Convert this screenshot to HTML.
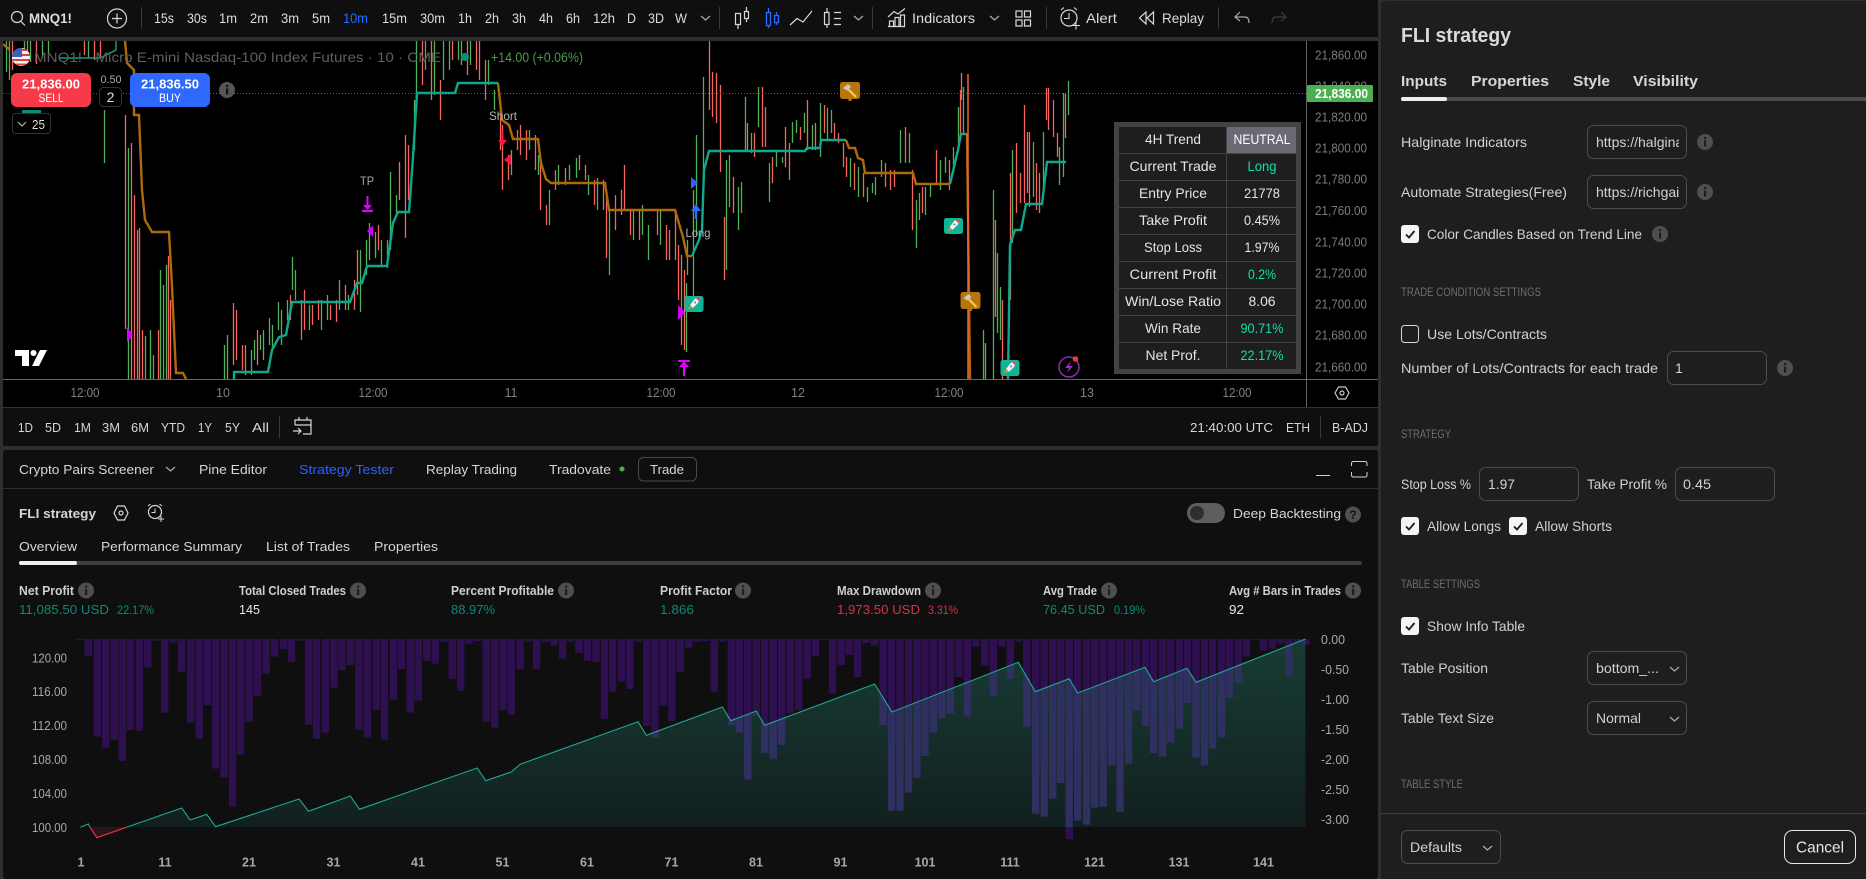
<!DOCTYPE html>
<html lang="en">
<head>
<meta charset="utf-8">
<title>MNQ1! - FLI strategy</title>
<style>
html,body{margin:0;padding:0;background:#2e2e2e;width:1866px;height:879px;overflow:hidden}
svg{display:block;position:absolute;left:0;top:0}
text{font-family:"Liberation Sans",sans-serif;font-size:14px;fill:#d6d6d6}
.b{font-weight:700}
.tb text,.tb{fill:#dcdcdc}
.s12{font-size:12px}.s13{font-size:13px}
.ax{font-size:13px;fill:#7d7d7d}
.ax2{font-size:12.5px;fill:#a8a8a8}
.ti{font-size:12.5px;fill:#808080}
.lab{fill:#d2d2d2}
.sec{font-size:11.5px;fill:#6e6e6e}
.stat{font-size:12.5px;fill:#cfcfcf;font-weight:700}
.val{font-size:13px}
.gr{fill:#0b8a74}.rd{fill:#d9304a}.wh{fill:#e6e6e6}
.tc{text-anchor:middle;fill:#e4e4e4}
.tg{text-anchor:middle;fill:#12dfa8}
.box{fill:none;stroke:#4c4c4c;stroke-width:1}
.ic{fill:none;stroke:#d8d8d8;stroke-width:1.2}
.chev{fill:none;stroke:#b0b0b0;stroke-width:1.2}
</style>
</head>
<body>
<svg xmlns="http://www.w3.org/2000/svg" width="1866" height="879" viewBox="0 0 1866 879">
<defs>
<clipPath id="chartClip"><rect x="3" y="41" width="1303" height="338"/></clipPath>
<clipPath id="flag"><circle cx="21" cy="57" r="9"/></clipPath>
<clipPath id="areaClip"><path d="M127 827L181.700 808L190.200 820L206.700 814.300L215.600 826.700L299.100 799L308.500 811.300L350.400 796L359.400 809.300L477.200 768L485.700 780.700L511.200 772L520.100 764.300L638 721.700L646.400 735.300L722.300 707L730.800 720.700L756.300 711L764.700 725.300L874.600 684L892 712L1018.300 662.300L1035.300 691.700L1069.200 678.700L1077.700 693L1145 667.300L1153.600 681.700L1187 668.300L1196 682.300L1305.400 639V827z"/></clipPath>
<linearGradient id="areaG" x1="0" y1="639" x2="0" y2="827" gradientUnits="userSpaceOnUse"><stop offset="0" stop-color="#183c35"/><stop offset="1" stop-color="#12201f"/></linearGradient>
<g id="info"><circle cx="0" cy="0" r="8" fill="#4f4f4f"/><rect x="-1" y="-1.500" width="2.200" height="6" fill="#1e1e1e"/><rect x="-1" y="-5" width="2.200" height="2.200" fill="#1e1e1e"/></g>
<g id="chk"><rect x="0" y="0" width="18" height="18" rx="3" fill="#f4f4f4"/><path d="M5 9.500L8 12.500L13.500 6" fill="none" stroke="#1e1e1e" stroke-width="1.800"/></g>
<path id="cv" d="M0 0L4.500 4L9 0" class="chev"/>
<g id="rocket"><rect x="-9.500" y="-8" width="19" height="16" rx="2.500" fill="#0fb594"/><path d="M5.500 -6.500L1 -5.500L-4 1L-1 4L4.500 -1.500z" fill="#f4f4f4" stroke="#8fa8b0" stroke-width=".4"/><path d="M5.500 -6.500L2 -5.700L4.700 -3z" fill="#e5393a"/><circle cx="1" cy="-1.500" r="1" fill="#4a7fd0"/><path d="M-3.500 1.500L-6.500 5.500L-1.500 3.500z" fill="#f0902a"/></g>
<g id="hammer"><rect x="-10" y="-9" width="20" height="17" rx="2.500" fill="#b8750c"/><rect x="-1.500" y="8" width="3" height="2" fill="#b8750c"/><path d="M-3 -3L6 6" stroke="#f0cf5a" stroke-width="2.200"/><path d="M-7 -3L-2 -7L1 -4L-3 -0.500z" fill="#c9c9c9"/></g>
<g id="bars" fill="none" stroke-width="16.500">
<path transform="translate(0,630) scale(.44643,.33333)" d="M180 27V30M198 27V78M218 27V320M237 27V353M256 27V330M274 27V393M292 27V300M312 27V302M331 27V113M350 27V32M369 27V248M388 27V38M407 27V125M427 27V278M446 27V326M465 27V225M483 27V416M502 27V443M521 27V530M539 27V374M558 27V275M577 27V197M596 27V131M615 27V80M635 27V57M653 27V96M672 27V32M691 27V284M709 27V326M729 27V308M748 27V173M766 27V120M785 27V105M804 27V299M823 27V323M843 27V240M861 27V329M881 27V209M899 27V117M919 27V248M937 27V212M956 27V93M975 27V101M994 27V35M1013 27V147M1032 27V182M1051 27V41M1070 27V33M1089 27V275M1108 27V293M1127 27V240M1145 27V254M1165 27V117M1184 27V35M1202 27V117M1222 27V35M1241 27V47M1260 27V86M1278 27V35M1297 27V69M1316 27V92M1335 27V96M1354 27V267M1372 27V185M1392 27V155M1411 27V177M1430 27V35M1449 27V288M1467 27V323M1486 27V228M1505 27V273M1524 27V126M1543 27V53M1562 27V35"/>
<path transform="translate(700,630) scale(.44643,.33333)" d="M12 27V33M32 27V185M51 27V35M70 27V285M88 27V308M107 27V449M126 27V258M145 27V369M164 27V386M183 27V345M202 27V250M221 27V240M240 27V146M259 27V78M278 27V30M297 27V191M316 27V105M334 27V75M353 27V141M372 27V39M391 27V47M410 27V285M429 27V542M448 27V542M467 27V488M486 27V443M504 27V378M523 27V308M542 27V264M561 27V251M580 27V141M599 27V260M618 27V50M638 27V107M657 27V197M676 27V50M695 27V147M714 27V35M732 27V290M752 27V551M771 27V560M790 27V506M808 27V459M827 27V627M846 27V572M866 27V584M884 27V533M903 27V530M922 27V407M941 27V545M960 27V401M978 27V243M998 27V288M1016 27V369M1036 27V380M1054 27V338M1074 27V296M1092 27V219M1111 27V383M1130 27V407M1148 27V356M1168 27V323M1186 27V204M1206 27V158M1224 27V80M1244 27V30M1262 27V62M1282 27V56M1300 27V41M1319 27V140M1338 27V38M1357 27V44"/>
</g>
</defs>

<rect width="1866" height="879" fill="#2e2e2e"/>

<!-- TOP TOOLBAR -->
<rect x="0" y="0" width="1378" height="37" fill="#0f0f0f"/>
<g class="tb">
<circle cx="17" cy="17" r="5.500" class="ic"/><path d="M21 21.500L25 25.500" class="ic"/>
<text x="29" y="23" class="b" textLength="43" lengthAdjust="spacingAndGlyphs">MNQ1!</text>
<circle cx="117" cy="18.500" r="9.500" class="ic"/><path d="M112 18.500H122M117 13.500V23.500" class="ic"/>
<path d="M141.500 7V29M719.500 7V29M872.500 7V29M1046.500 7V29M1218.500 7V29" stroke="#3a3a3a"/>
<text x="154" y="23" textLength="20" lengthAdjust="spacingAndGlyphs">15s</text>
<text x="187" y="23" textLength="20" lengthAdjust="spacingAndGlyphs">30s</text>
<text x="219" y="23" textLength="18" lengthAdjust="spacingAndGlyphs">1m</text>
<text x="250" y="23" textLength="18" lengthAdjust="spacingAndGlyphs">2m</text>
<text x="281" y="23" textLength="18" lengthAdjust="spacingAndGlyphs">3m</text>
<text x="312" y="23" textLength="18" lengthAdjust="spacingAndGlyphs">5m</text>
<text x="343" y="23" textLength="25" lengthAdjust="spacingAndGlyphs" style="fill:#1f6bff">10m</text>
<text x="382" y="23" textLength="25" lengthAdjust="spacingAndGlyphs">15m</text>
<text x="420" y="23" textLength="25" lengthAdjust="spacingAndGlyphs">30m</text>
<text x="458" y="23" textLength="14" lengthAdjust="spacingAndGlyphs">1h</text>
<text x="485" y="23" textLength="14" lengthAdjust="spacingAndGlyphs">2h</text>
<text x="512" y="23" textLength="14" lengthAdjust="spacingAndGlyphs">3h</text>
<text x="539" y="23" textLength="14" lengthAdjust="spacingAndGlyphs">4h</text>
<text x="566" y="23" textLength="14" lengthAdjust="spacingAndGlyphs">6h</text>
<text x="593" y="23" textLength="22" lengthAdjust="spacingAndGlyphs">12h</text>
<text x="627" y="23" textLength="9" lengthAdjust="spacingAndGlyphs">D</text>
<text x="648" y="23" textLength="16" lengthAdjust="spacingAndGlyphs">3D</text>
<text x="675" y="23" textLength="12" lengthAdjust="spacingAndGlyphs">W</text>
<use href="#cv" x="701" y="16"/>
<!-- bar style icons -->
<path d="M735.500 13.500h5v11h-5zM738 24.500V29M744.500 11.500h4v7h-4zM746.500 7V11.500M746.500 18.500V22" class="ic"/>
<path d="M766.500 12.500h4v13h-4zM768.500 8V12.500M768.500 25.500V28M774.500 15.500h4v7h-4zM776.500 12V15.500M776.500 22.500V25" fill="none" stroke="#2a6bff" stroke-width="1.300"/>
<path d="M790 25L797 18.500L803 22L812 11" class="ic"/>
<path d="M824.500 12.500h4.500v12h-4.500zM827 8V12.500M827 24.500V28M834 12.500h7M834 18.500h7M834 24.500h7" class="ic"/>
<use href="#cv" x="854" y="16"/>
<!-- indicators -->
<path d="M888 26.500H905M889.500 26V21h4v5M895 26V17.500h4V26M900.500 26V15h4V26M888 17L894 11.500L898 14L905 8.500" class="ic"/>
<text x="912" y="23" textLength="63" lengthAdjust="spacingAndGlyphs">Indicators</text>
<use href="#cv" x="990" y="16"/>
<path d="M1016 11h6v6h-6zM1024.500 11h6v6h-6zM1016 20h6v6h-6zM1024.500 20h6v6h-6z" class="ic"/>
<!-- alert -->
<circle cx="1069" cy="18" r="8" class="ic"/><path d="M1069 13V18.500H1064M1061 10L1064 7.500M1077 10L1074 7.500M1072 25.500H1080M1076 21.500V29.500" class="ic" style="stroke-width:1.100"/>
<text x="1086" y="23" textLength="31" lengthAdjust="spacingAndGlyphs">Alert</text>
<path d="M1146 12L1139.500 18L1146 24zM1153.500 12L1147 18L1153.500 24z" class="ic"/>
<text x="1162" y="23" textLength="42" lengthAdjust="spacingAndGlyphs">Replay</text>
<path d="M1240 12L1235 17L1240 21M1235 17H1245C1248 17 1249 20 1249 23" class="ic" style="stroke:#a8a8a8"/>
<path d="M1281 12L1286 17L1281 21M1286 17H1276C1273 17 1272 20 1272 23" class="ic" style="stroke:#3d3d3d"/>
</g>

<!-- CHART -->
<rect x="3" y="41" width="1375" height="366" fill="#000"/>
<g clip-path="url(#chartClip)">
<g transform="translate(.5 0)" fill="none" stroke-width="1.300">
<path stroke="#4fb25a" d="M6 41V72M9 41V80M24 41V60M30 41V62M42 41V58M48 41V60M88 41V58M104 110V163M128 148V379M145 336V379M150 330V379M153 355V379M160 270V379M163 285V379M166 265V379M224 345V379M227 335V379M251 350V375M254 340V360M260 335V350M263 330V360M269 318V345M272 325V350M278 302V330M281 310V345M287 300V320M292 257V290M295 270V300M309 305V330M321 300V330M327 295V320M339 280V310M348 295V310M360 250V312M366 240V275M369 223V260M375 232V258M381 240V265M387 240V268M390 172V250M396 195V215M414 100V150M416 41V100M425 41V70M434 41V95M443 41V80M449 41V70M458 41V60M461 41V65M470 41V65M488 60V85M494 90V110M511 150V175M529 130V150M538 155V175M549 190V225M558 165V185M569 165V180M576 158V178M588 175V195M597 178V210M609 210V275M633 210V240M642 205V235M648 225V260M660 210V245M687 240V275M686 283V352M693 190V300M696 135V235M703 77V175M726 160V270M729 155V207M738 187V230M741 182V213M745 97V150M751 133V153M758 87V127M769 163V202M776 152V167M782 157V163M792 122V143M796 120V133M804 113V133M812 125V150M820 103V157M827 108V140M831 110V133M850 158V187M858 167V197M867 187V202M872 183V193M875 177V195M881 160V177M900 130V163M909 133V163M916 200V248M919 193V220M925 187V215M930 183V197M940 160V190M945 157V173M953 147V173M958 107V147M963 87V133M983 330V379M985 343V379M993 190V379M997 253V333M1000 287V340M1012 150V243M1033 142V197M1043 132V187M1059 147V185M1063 93V177M1068 81V115"/>
<path stroke="#f5655e" d="M12 41V70M27 41V55M36 41V64M84 41V55M94 41V60M100 41V58M125 115V329M131 143V379M134 195V379M137 230V379M139 228V379M142 330V379M158 330V379M168 256V379M170 300V379M233 303V365M236 310V360M242 345V370M245 345V375M257 330V365M290 295V320M301 300V340M304 290V330M312 305V325M318 300V320M330 305V320M336 300V322M345 285V310M354 280V310M357 250V295M378 225V250M399 162V200M405 135V238M408 145V200M422 41V85M431 41V100M440 80V120M452 41V60M467 41V75M476 41V70M479 41V80M485 60V100M500 100V150M502 125V190M508 155V180M517 130V150M520 125V155M526 130V160M535 135V170M540 160V210M546 205V225M555 170V190M565 168V185M579 155V170M585 165V180M594 180V205M603 180V210M606 195V258M615 195V230M621 190V215M624 165V210M630 210V235M639 210V240M657 210V235M666 225V260M669 230V260M675 210V260M678 245V300M681 255V345M684 270V350M709 41V110M712 72V117M716 73V123M720 85V172M724 217V280M733 177V213M747 123V150M754 133V157M762 87V147M765 107V147M772 157V183M785 127V167M789 143V180M800 127V140M807 100V150M815 123V150M824 105V133M834 123V140M838 133V143M843 143V167M846 157V177M854 163V190M863 173V197M885 163V187M890 170V190M894 170V187M905 127V163M912 170V230M922 187V213M936 150V183M949 160V190M960 90V133M961 73V100M995 220V317M1002 300V379M1010 173V300M1016 143V213M1020 173V203M1024 105V203M1027 132V193M1029 132V207M1036 163V210M1039 173V213M1046 88V120M1048 88V130M1053 100V137M1057 133V157M1065 93V138"/>
</g>
<!-- top-left remains of trend -->
<path d="M3 44L10 50" stroke="#ac6a08" stroke-width="2.400" fill="none"/>
<path d="M60 58H100L116 50V41" stroke="#0e9e86" stroke-width="1.500" fill="none"/>
<!-- trend lines -->
<path fill="none" stroke="#ac6a08" stroke-width="2.400" d="M125 41L127 63L134 70V115H139L142 190L145 220L152 232H169L172 287L176 373H183L186 379"/>
<path fill="none" stroke="#0fa88d" stroke-width="2.400" d="M234 379V372H268L272 350L279 337L286 335L292 302H350L357 283H362L367 266H387L393 223L398 212H409L413 157L417 93H455L458 83H498"/>
<path fill="none" stroke="#ac6a08" stroke-width="2.400" d="M498 83L502 120L509 125L513 139H538L541 163L546 179L551 183H605L609 210H675L683 237L687 256H692"/>
<path fill="none" stroke="#0fa88d" stroke-width="2.400" d="M692 256L699 240L702 230L704 170L709 151H805L807 148H820L821 140H846"/>
<path fill="none" stroke="#ac6a08" stroke-width="2.400" d="M846 140L849 148H855L858 158L863 160L865 173H913L916 184H950"/>
<path fill="none" stroke="#0fa88d" stroke-width="2.400" d="M950 184L958 150L961 134H967"/>
<path fill="none" stroke="#ac6a08" stroke-width="2.400" d="M967 134L970 379"/>
<path fill="none" stroke="#f0653a" stroke-width="1.500" d="M968 74V379"/>
<path fill="none" stroke="#0fa88d" stroke-width="2.400" d="M1008 379L1010 245L1015 230H1021L1026 204H1042L1047 162H1066"/>
<path d="M3 93.500H1306" stroke="#3e7a3e" stroke-dasharray="1 2"/>
</g>

<!-- markers -->
<use href="#hammer" x="500" y="36" clip-path="url(#chartClip)"/>
<text x="367" y="185" class="s12" text-anchor="middle" style="fill:#a8a8a8" textLength="14" lengthAdjust="spacingAndGlyphs">TP</text>
<path d="M367.500 196V206" stroke="#e000ff" stroke-width="2"/><path d="M363 205L367.500 210L372 205z" fill="#e000ff"/><rect x="362" y="210" width="11" height="2" fill="#e000ff"/>
<path d="M373 225.500V237L367 231z" fill="#d400ff"/>
<path d="M127 327V342L133 335z" fill="#d400ff"/>
<text x="503" y="120" class="s12" text-anchor="middle" style="fill:#b5b5b5" textLength="28" lengthAdjust="spacingAndGlyphs">Short</text>
<path d="M502.500 130V141" stroke="#ff1744" stroke-width="2"/><path d="M498 140L502.500 146L507 140z" fill="#ff1744"/>
<path d="M511 154V165L504 160z" fill="#f01a40"/>
<text x="698" y="237" class="s12" text-anchor="middle" style="fill:#b5b5b5" textLength="25" lengthAdjust="spacingAndGlyphs">Long</text>
<path d="M691 177V189L698 183z" fill="#2962ff"/>
<path d="M696 210V219" stroke="#2f6bff" stroke-width="2.200"/><path d="M691 211L696 204L701 211z" fill="#2f6bff"/>
<path d="M678 305V320L685 312.500z" fill="#d400ff"/>
<rect x="678" y="360" width="12" height="2" fill="#e000ff"/><path d="M684 365V376" stroke="#e000ff" stroke-width="2"/><path d="M679 367L684 361L689 367z" fill="#e000ff"/>
<use href="#rocket" x="694" y="304"/>
<use href="#rocket" x="953.500" y="226"/>
<use href="#rocket" x="1010" y="368"/>
<use href="#hammer" x="850" y="91"/>
<use href="#hammer" x="970.500" y="301"/>
<circle cx="1069" cy="367" r="10" fill="none" stroke="#8a2bb0" stroke-width="1.500"/>
<path d="M1071 361L1065 368H1069L1067 373L1073 366H1069z" fill="#a12cc4"/>
<circle cx="1075.500" cy="359" r="2.800" fill="#f23645"/>

<!-- legend -->
<g clip-path="url(#flag)"><rect x="12" y="48" width="18" height="18" fill="#f4f4f4"/><path d="M12 50H30M12 55H30M12 60H30M12 64.500H30" stroke="#e0413c" stroke-width="2"/><rect x="12" y="48" width="10" height="9" fill="#3b5fbf"/></g>
<text x="34" y="62" textLength="407" lengthAdjust="spacingAndGlyphs" style="fill:#5f5f5f">MNQ1! · Micro E-mini Nasdaq-100 Index Futures · 10 · CME</text>
<circle cx="465" cy="57" r="4" fill="#0d8c78"/>
<text x="491" y="62" textLength="92" lengthAdjust="spacingAndGlyphs" style="fill:#4a9c4a">+14.00 (+0.06%)</text>

<!-- buy/sell -->
<rect x="11" y="73" width="80" height="34" rx="6" fill="#f73a4a"/>
<text x="51" y="88.500" class="s13 b" text-anchor="middle" style="fill:#fff" textLength="58" lengthAdjust="spacingAndGlyphs">21,836.00</text>
<text x="51" y="102" class="s12" text-anchor="middle" style="fill:#fff" textLength="25" lengthAdjust="spacingAndGlyphs">SELL</text>
<text x="111" y="83" class="s12" text-anchor="middle" style="fill:#aaa;font-size:11px" textLength="21" lengthAdjust="spacingAndGlyphs">0.50</text>
<rect x="99.500" y="87.500" width="22" height="19" rx="4" fill="#000" stroke="#333"/>
<text x="110.500" y="102" text-anchor="middle" style="fill:#ddd">2</text>
<rect x="130" y="73" width="80" height="34" rx="6" fill="#2f68ff"/>
<text x="170" y="88.500" class="s13 b" text-anchor="middle" style="fill:#fff" textLength="58" lengthAdjust="spacingAndGlyphs">21,836.50</text>
<text x="170" y="102" class="s12" text-anchor="middle" style="fill:#fff" textLength="22" lengthAdjust="spacingAndGlyphs">BUY</text>
<circle cx="227" cy="90" r="8" fill="#555"/><rect x="226" y="88.500" width="2.200" height="6" fill="#111"/><rect x="226" y="85" width="2.200" height="2.200" fill="#111"/>
<rect x="22" y="110" width="19" height="3" fill="#0e8a76"/>
<rect x="12.500" y="113.500" width="38" height="20" rx="3" fill="#000" stroke="#333"/>
<path d="M18 122L22 126L26 122" class="chev"/>
<text x="32" y="129" class="s13" style="fill:#ddd" textLength="13" lengthAdjust="spacingAndGlyphs">25</text>

<!-- TV logo -->
<path d="M15 350H29V366H22V356H15z" fill="#fff"/><circle cx="33.500" cy="353" r="3" fill="#fff"/><path d="M40 350H47L39 366H32z" fill="#fff"/>

<!-- info table -->
<rect x="1114" y="122" width="187" height="252" fill="#434343"/>
<rect x="1119" y="127" width="177" height="242" fill="#1e1e1e"/>
<rect x="1227" y="127" width="69" height="26.500" fill="#6a6a74"/>
<path d="M1119 153.500H1296M1119 180.500H1296M1119 207.500H1296M1119 234.500H1296M1119 261.500H1296M1119 288.500H1296M1119 315.500H1296M1119 342.500H1296M1226.500 127V369" stroke="#434343"/>
<text x="1173" y="144" class="tc" textLength="56" lengthAdjust="spacingAndGlyphs">4H Trend</text>
<text x="1262" y="144" class="tc" style="fill:#fff" textLength="57" lengthAdjust="spacingAndGlyphs">NEUTRAL</text>
<text x="1173" y="171" class="tc" textLength="87" lengthAdjust="spacingAndGlyphs">Current Trade</text>
<text x="1262" y="171" class="tg" textLength="29" lengthAdjust="spacingAndGlyphs">Long</text>
<text x="1173" y="198" class="tc" textLength="68" lengthAdjust="spacingAndGlyphs">Entry Price</text>
<text x="1262" y="198" class="tc" textLength="36" lengthAdjust="spacingAndGlyphs">21778</text>
<text x="1173" y="225" class="tc" textLength="68" lengthAdjust="spacingAndGlyphs">Take Profit</text>
<text x="1262" y="225" class="tc" textLength="36" lengthAdjust="spacingAndGlyphs">0.45%</text>
<text x="1173" y="252" class="tc" textLength="58" lengthAdjust="spacingAndGlyphs">Stop Loss</text>
<text x="1262" y="252" class="tc" textLength="35" lengthAdjust="spacingAndGlyphs">1.97%</text>
<text x="1173" y="279" class="tc" textLength="87" lengthAdjust="spacingAndGlyphs">Current Profit</text>
<text x="1262" y="279" class="tg" textLength="28" lengthAdjust="spacingAndGlyphs">0.2%</text>
<text x="1173" y="306" class="tc" textLength="96" lengthAdjust="spacingAndGlyphs">Win/Lose Ratio</text>
<text x="1262" y="306" class="tc" textLength="27" lengthAdjust="spacingAndGlyphs">8.06</text>
<text x="1173" y="333" class="tc" textLength="56" lengthAdjust="spacingAndGlyphs">Win Rate</text>
<text x="1262" y="333" class="tg" textLength="43" lengthAdjust="spacingAndGlyphs">90.71%</text>
<text x="1173" y="360" class="tc" textLength="55" lengthAdjust="spacingAndGlyphs">Net Prof.</text>
<text x="1262" y="360" class="tg" textLength="43" lengthAdjust="spacingAndGlyphs">22.17%</text>

<!-- price axis -->
<path d="M1306.500 41V407" stroke="#666"/>
<path d="M3 379.500H1378" stroke="#666"/>
<g class="ax">
<text x="1315" y="59.500" class="ax" textLength="52" lengthAdjust="spacingAndGlyphs">21,860.00</text>
<text x="1315" y="90.500" class="ax" textLength="52" lengthAdjust="spacingAndGlyphs">21,840.00</text>
<text x="1315" y="121.500" class="ax" textLength="52" lengthAdjust="spacingAndGlyphs">21,820.00</text>
<text x="1315" y="152.500" class="ax" textLength="52" lengthAdjust="spacingAndGlyphs">21,800.00</text>
<text x="1315" y="183.500" class="ax" textLength="52" lengthAdjust="spacingAndGlyphs">21,780.00</text>
<text x="1315" y="215" class="ax" textLength="52" lengthAdjust="spacingAndGlyphs">21,760.00</text>
<text x="1315" y="246.500" class="ax" textLength="52" lengthAdjust="spacingAndGlyphs">21,740.00</text>
<text x="1315" y="277.500" class="ax" textLength="52" lengthAdjust="spacingAndGlyphs">21,720.00</text>
<text x="1315" y="308.500" class="ax" textLength="52" lengthAdjust="spacingAndGlyphs">21,700.00</text>
<text x="1315" y="339.500" class="ax" textLength="52" lengthAdjust="spacingAndGlyphs">21,680.00</text>
<text x="1315" y="371.500" class="ax" textLength="52" lengthAdjust="spacingAndGlyphs">21,660.00</text>
</g>
<rect x="1307" y="85" width="66" height="17" rx="1" fill="#4caf50"/>
<text x="1315" y="98" class="s13 b" style="fill:#fff" textLength="53" lengthAdjust="spacingAndGlyphs">21,836.00</text>

<!-- time axis -->
<g>
<text x="85" y="397" class="ti" text-anchor="middle" textLength="29" lengthAdjust="spacingAndGlyphs">12:00</text>
<text x="223" y="397" class="ti" text-anchor="middle">10</text>
<text x="373" y="397" class="ti" text-anchor="middle" textLength="29" lengthAdjust="spacingAndGlyphs">12:00</text>
<text x="511" y="397" class="ti" text-anchor="middle">11</text>
<text x="661" y="397" class="ti" text-anchor="middle" textLength="29" lengthAdjust="spacingAndGlyphs">12:00</text>
<text x="798" y="397" class="ti" text-anchor="middle">12</text>
<text x="949" y="397" class="ti" text-anchor="middle" textLength="29" lengthAdjust="spacingAndGlyphs">12:00</text>
<text x="1087" y="397" class="ti" text-anchor="middle">13</text>
<text x="1237" y="397" class="ti" text-anchor="middle" textLength="29" lengthAdjust="spacingAndGlyphs">12:00</text>
</g>
<path d="M1335 393L1338.500 387H1345.500L1349 393L1345.500 399H1338.500z" class="ic" style="stroke:#c8c8c8"/><circle cx="1342" cy="393" r="2" class="ic" style="stroke:#c8c8c8"/>

<!-- range bar -->
<rect x="3" y="407" width="1375" height="39" fill="#0f0f0f"/>
<path d="M3 407.500H1378" stroke="#333"/>
<g>
<text x="18" y="432" class="s13" textLength="15" lengthAdjust="spacingAndGlyphs">1D</text>
<text x="45" y="432" class="s13" textLength="16" lengthAdjust="spacingAndGlyphs">5D</text>
<text x="74" y="432" class="s13" textLength="17" lengthAdjust="spacingAndGlyphs">1M</text>
<text x="102" y="432" class="s13" textLength="18" lengthAdjust="spacingAndGlyphs">3M</text>
<text x="131" y="432" class="s13" textLength="18" lengthAdjust="spacingAndGlyphs">6M</text>
<text x="161" y="432" class="s13" textLength="24" lengthAdjust="spacingAndGlyphs">YTD</text>
<text x="198" y="432" class="s13" textLength="14" lengthAdjust="spacingAndGlyphs">1Y</text>
<text x="225" y="432" class="s13" textLength="15" lengthAdjust="spacingAndGlyphs">5Y</text>
<text x="252" y="432" class="s13" textLength="17" lengthAdjust="spacingAndGlyphs">All</text>
<path d="M279.500 416V438M1320.500 416V438" stroke="#3a3a3a"/>
<path d="M295 425V420H311V434H303M295 425H311M299 417V420M307 417V420M293 431H301M298 428L301 431L298 434" class="ic"/>
<text x="1190" y="432" class="s13" textLength="83" lengthAdjust="spacingAndGlyphs">21:40:00 UTC</text>
<text x="1286" y="432" class="s13" textLength="24" lengthAdjust="spacingAndGlyphs">ETH</text>
<text x="1332" y="432" class="s13" textLength="36" lengthAdjust="spacingAndGlyphs">B-ADJ</text>
</g>

<!-- BOTTOM PANEL -->
<rect x="3" y="450" width="1375" height="429" rx="3" fill="#0f0f0f"/>
<path d="M3 488.500H1378" stroke="#2e2e2e"/>
<text x="19" y="474" class="s13" textLength="135" lengthAdjust="spacingAndGlyphs">Crypto Pairs Screener</text>
<use href="#cv" x="166" y="467"/>
<text x="199" y="474" class="s13" textLength="68" lengthAdjust="spacingAndGlyphs">Pine Editor</text>
<text x="299" y="474" class="s13" style="fill:#2962ff" textLength="95" lengthAdjust="spacingAndGlyphs">Strategy Tester</text>
<text x="426" y="474" class="s13" textLength="91" lengthAdjust="spacingAndGlyphs">Replay Trading</text>
<text x="549" y="474" class="s13" textLength="62" lengthAdjust="spacingAndGlyphs">Tradovate</text>
<circle cx="622" cy="469" r="2.500" fill="#4caf50"/>
<rect x="638.500" y="457.500" width="58" height="23.500" rx="5" fill="none" stroke="#4a4a4a"/>
<text x="650" y="474" class="s13" textLength="34" lengthAdjust="spacingAndGlyphs">Trade</text>
<path d="M1316 475.500H1330" stroke="#d0d0d0"/>
<path d="M1351.500 466V463.500Q1351.500 461.500 1353.500 461.500H1365Q1367 461.500 1367 463.500V466M1351.500 472V475Q1351.500 477 1353.500 477H1365Q1367 477 1367 475V472" fill="none" stroke="#d0d0d0"/>

<text x="19" y="518" class="s13 b" textLength="77" lengthAdjust="spacingAndGlyphs">FLI strategy</text>
<path d="M114 513L117.500 506H124.500L128 513L124.500 520H117.500z" class="ic"/><circle cx="121" cy="513" r="2" class="ic"/>
<circle cx="155" cy="512" r="6.500" class="ic"/><path d="M155 508.500V512.500H151.500M148 506L150.500 504M162 506L159.500 504M158 519H164M161 516V522" class="ic" style="stroke-width:1"/>
<rect x="1187" y="503" width="38" height="20" rx="10" fill="#5e5e5e"/><circle cx="1197" cy="513" r="7" fill="#2e2e2e"/>
<text x="1233" y="518" class="s13" textLength="108" lengthAdjust="spacingAndGlyphs">Deep Backtesting</text>
<circle cx="1353" cy="514.500" r="8" fill="#4f4f4f"/><text x="1353" y="519" class="s12 b" text-anchor="middle" style="fill:#111">?</text>

<text x="19" y="551" class="s13" textLength="58" lengthAdjust="spacingAndGlyphs">Overview</text>
<text x="101" y="551" class="s13" textLength="141" lengthAdjust="spacingAndGlyphs">Performance Summary</text>
<text x="266" y="551" class="s13" textLength="84" lengthAdjust="spacingAndGlyphs">List of Trades</text>
<text x="374" y="551" class="s13" textLength="64" lengthAdjust="spacingAndGlyphs">Properties</text>
<rect x="19" y="561" width="1343" height="4" rx="2" fill="#3e3e3e"/>
<rect x="19" y="561" width="58" height="4" rx="2" fill="#eee"/>

<!-- stats -->
<text x="19" y="595" class="stat" textLength="55" lengthAdjust="spacingAndGlyphs">Net Profit</text><use href="#info" x="86" y="590.500"/>
<text x="19" y="614" class="val gr" textLength="90" lengthAdjust="spacingAndGlyphs">11,085.50 USD</text>
<text x="117" y="614" class="s12 gr" textLength="37" lengthAdjust="spacingAndGlyphs">22.17%</text>
<text x="239" y="595" class="stat" textLength="107" lengthAdjust="spacingAndGlyphs">Total Closed Trades</text><use href="#info" x="358" y="590.500"/>
<text x="239" y="614" class="val wh" textLength="21" lengthAdjust="spacingAndGlyphs">145</text>
<text x="451" y="595" class="stat" textLength="103" lengthAdjust="spacingAndGlyphs">Percent Profitable</text><use href="#info" x="566" y="590.500"/>
<text x="451" y="614" class="val gr" textLength="44" lengthAdjust="spacingAndGlyphs">88.97%</text>
<text x="660" y="595" class="stat" textLength="72" lengthAdjust="spacingAndGlyphs">Profit Factor</text><use href="#info" x="743" y="590.500"/>
<text x="660" y="614" class="val gr" textLength="34" lengthAdjust="spacingAndGlyphs">1.866</text>
<text x="837" y="595" class="stat" textLength="84" lengthAdjust="spacingAndGlyphs">Max Drawdown</text><use href="#info" x="933" y="590.500"/>
<text x="837" y="614" class="val rd" textLength="83" lengthAdjust="spacingAndGlyphs">1,973.50 USD</text>
<text x="928" y="614" class="s12 rd" textLength="30" lengthAdjust="spacingAndGlyphs">3.31%</text>
<text x="1043" y="595" class="stat" textLength="54" lengthAdjust="spacingAndGlyphs">Avg Trade</text><use href="#info" x="1109" y="590.500"/>
<text x="1043" y="614" class="val gr" textLength="62" lengthAdjust="spacingAndGlyphs">76.45 USD</text>
<text x="1114" y="614" class="s12 gr" textLength="31" lengthAdjust="spacingAndGlyphs">0.19%</text>
<text x="1229" y="595" class="stat" textLength="112" lengthAdjust="spacingAndGlyphs">Avg # Bars in Trades</text><use href="#info" x="1353" y="590.500"/>
<text x="1229" y="614" class="val wh" textLength="15" lengthAdjust="spacingAndGlyphs">92</text>

<!-- equity chart -->
<use href="#bars" stroke="#2e1050"/>
<path d="M127 827L181.700 808L190.200 820L206.700 814.300L215.600 826.700L299.100 799L308.500 811.300L350.400 796L359.400 809.300L477.200 768L485.700 780.700L511.200 772L520.100 764.300L638 721.700L646.400 735.300L722.300 707L730.800 720.700L756.300 711L764.700 725.300L874.600 684L892 712L1018.300 662.300L1035.300 691.700L1069.200 678.700L1077.700 693L1145 667.300L1153.600 681.700L1187 668.300L1196 682.300L1305.400 639V827z" fill="url(#areaG)"/>
<use href="#bars" stroke="#2f3060" clip-path="url(#areaClip)"/>
<path d="M89.500 827L96.900 837.700L127 827z" fill="#2c1518"/>
<path d="M80.400 827.300L88.400 824L89.500 826.500M127.200 827L181.700 808L190.200 820L206.700 814.300L215.600 826.700L299.100 799L308.500 811.300L350.400 796L359.400 809.300L477.200 768L485.700 780.700L511.200 772L520.100 764.300L638 721.700L646.400 735.300L722.300 707L730.800 720.700L756.300 711L764.700 725.300L874.600 684L892 712L1018.300 662.300L1035.300 691.700L1069.200 678.700L1077.700 693L1145 667.300L1153.600 681.700L1187 668.300L1196 682.300L1305.400 639" fill="none" stroke="#22a690" stroke-width="1.100"/>
<path d="M89.500 826.500L96.900 837.700L127.200 827" fill="none" stroke="#f23645" stroke-width="1.100"/>

<g>
<text x="32" y="662.500" class="ax2" textLength="35" lengthAdjust="spacingAndGlyphs">120.00</text>
<text x="32" y="696" class="ax2" textLength="35" lengthAdjust="spacingAndGlyphs">116.00</text>
<text x="32" y="730" class="ax2" textLength="35" lengthAdjust="spacingAndGlyphs">112.00</text>
<text x="32" y="764" class="ax2" textLength="35" lengthAdjust="spacingAndGlyphs">108.00</text>
<text x="32" y="798" class="ax2" textLength="35" lengthAdjust="spacingAndGlyphs">104.00</text>
<text x="32" y="832" class="ax2" textLength="35" lengthAdjust="spacingAndGlyphs">100.00</text>
<text x="1321" y="644" class="ax2" textLength="24" lengthAdjust="spacingAndGlyphs">0.00</text>
<text x="1321" y="674" class="ax2" textLength="28" lengthAdjust="spacingAndGlyphs">-0.50</text>
<text x="1321" y="704" class="ax2" textLength="28" lengthAdjust="spacingAndGlyphs">-1.00</text>
<text x="1321" y="734" class="ax2" textLength="28" lengthAdjust="spacingAndGlyphs">-1.50</text>
<text x="1321" y="764" class="ax2" textLength="28" lengthAdjust="spacingAndGlyphs">-2.00</text>
<text x="1321" y="794" class="ax2" textLength="28" lengthAdjust="spacingAndGlyphs">-2.50</text>
<text x="1321" y="824" class="ax2" textLength="28" lengthAdjust="spacingAndGlyphs">-3.00</text>
<text x="81" y="866.500" class="ax2 b" text-anchor="middle">1</text>
<text x="165" y="866.500" class="ax2 b" text-anchor="middle">11</text>
<text x="249" y="866.500" class="ax2 b" text-anchor="middle">21</text>
<text x="333.500" y="866.500" class="ax2 b" text-anchor="middle">31</text>
<text x="418" y="866.500" class="ax2 b" text-anchor="middle">41</text>
<text x="502.500" y="866.500" class="ax2 b" text-anchor="middle">51</text>
<text x="587" y="866.500" class="ax2 b" text-anchor="middle">61</text>
<text x="671.500" y="866.500" class="ax2 b" text-anchor="middle">71</text>
<text x="756" y="866.500" class="ax2 b" text-anchor="middle">81</text>
<text x="840.500" y="866.500" class="ax2 b" text-anchor="middle">91</text>
<text x="925" y="866.500" class="ax2 b" text-anchor="middle">101</text>
<text x="1010" y="866.500" class="ax2 b" text-anchor="middle">111</text>
<text x="1094.500" y="866.500" class="ax2 b" text-anchor="middle">121</text>
<text x="1179" y="866.500" class="ax2 b" text-anchor="middle">131</text>
<text x="1263.500" y="866.500" class="ax2 b" text-anchor="middle">141</text>
</g>

<!-- DIALOG -->
<rect x="1381" y="1" width="490" height="880" rx="4" fill="#1e1e1e"/>
<text x="1401" y="42" class="b" style="font-size:20px;fill:#dadada" textLength="110" lengthAdjust="spacingAndGlyphs">FLI strategy</text>
<g class="b" style="font-size:15px">
<text x="1401" y="86" class="b" style="font-size:15px" textLength="46" lengthAdjust="spacingAndGlyphs">Inputs</text>
<text x="1471" y="86" class="b" style="font-size:15px" textLength="78" lengthAdjust="spacingAndGlyphs">Properties</text>
<text x="1573" y="86" class="b" style="font-size:15px" textLength="37" lengthAdjust="spacingAndGlyphs">Style</text>
<text x="1633" y="86" class="b" style="font-size:15px" textLength="65" lengthAdjust="spacingAndGlyphs">Visibility</text>
</g>
<rect x="1401" y="97" width="465" height="4" fill="#4a4a4a"/>
<rect x="1401" y="97" width="46" height="4" rx="2" fill="#eee"/>

<text x="1401" y="147" class="lab" textLength="126" lengthAdjust="spacingAndGlyphs">Halginate Indicators</text>
<rect x="1587.500" y="125.500" width="99" height="33" rx="6" class="box"/>
<svg x="1596" y="126" width="83" height="32" viewBox="0 0 83 32"><text x="0" y="21" class="lab" style="font-size:14px">https://halginate.com</text></svg>
<use href="#info" x="1705" y="142"/>

<text x="1401" y="197" class="lab" textLength="166" lengthAdjust="spacingAndGlyphs">Automate Strategies(Free)</text>
<rect x="1587.500" y="175.500" width="99" height="33" rx="6" class="box"/>
<svg x="1596" y="176" width="83" height="32" viewBox="0 0 83 32"><text x="0" y="21" class="lab" style="font-size:14px">https://richgains.io</text></svg>
<use href="#info" x="1705" y="192"/>

<use href="#chk" x="1401" y="225"/>
<text x="1427" y="239" class="lab" textLength="215" lengthAdjust="spacingAndGlyphs">Color Candles Based on Trend Line</text>
<use href="#info" x="1660" y="234"/>

<text x="1401" y="296" class="sec" textLength="140" lengthAdjust="spacingAndGlyphs">TRADE CONDITION SETTINGS</text>

<rect x="1401.500" y="325.500" width="17" height="17" rx="3" fill="none" stroke="#d8d8d8"/>
<text x="1427" y="339" class="lab" textLength="120" lengthAdjust="spacingAndGlyphs">Use Lots/Contracts</text>

<text x="1401" y="373" class="lab" textLength="257" lengthAdjust="spacingAndGlyphs">Number of Lots/Contracts for each trade</text>
<rect x="1667.500" y="351.500" width="99" height="33" rx="6" class="box"/>
<text x="1675" y="373" class="lab">1</text>
<use href="#info" x="1785" y="368"/>

<text x="1401" y="438" class="sec" textLength="50" lengthAdjust="spacingAndGlyphs">STRATEGY</text>

<text x="1401" y="489" class="lab" textLength="70" lengthAdjust="spacingAndGlyphs">Stop Loss %</text>
<rect x="1479.500" y="467.500" width="99" height="33" rx="6" class="box"/>
<text x="1488" y="489" class="lab" textLength="27" lengthAdjust="spacingAndGlyphs">1.97</text>
<text x="1587" y="489" class="lab" textLength="80" lengthAdjust="spacingAndGlyphs">Take Profit %</text>
<rect x="1675.500" y="467.500" width="99" height="33" rx="6" class="box"/>
<text x="1683" y="489" class="lab" textLength="28" lengthAdjust="spacingAndGlyphs">0.45</text>

<use href="#chk" x="1401" y="517"/>
<text x="1427" y="531" class="lab" textLength="74" lengthAdjust="spacingAndGlyphs">Allow Longs</text>
<use href="#chk" x="1509" y="517"/>
<text x="1535" y="531" class="lab" textLength="77" lengthAdjust="spacingAndGlyphs">Allow Shorts</text>

<text x="1401" y="588" class="sec" textLength="79" lengthAdjust="spacingAndGlyphs">TABLE SETTINGS</text>

<use href="#chk" x="1401" y="617"/>
<text x="1427" y="631" class="lab" textLength="98" lengthAdjust="spacingAndGlyphs">Show Info Table</text>

<text x="1401" y="673" class="lab" textLength="87" lengthAdjust="spacingAndGlyphs">Table Position</text>
<rect x="1587.500" y="651.500" width="99" height="33" rx="6" class="box"/>
<text x="1596" y="673" class="lab" textLength="63" lengthAdjust="spacingAndGlyphs">bottom_...</text>
<use href="#cv" x="1670" y="667"/>

<text x="1401" y="723" class="lab" textLength="93" lengthAdjust="spacingAndGlyphs">Table Text Size</text>
<rect x="1587.500" y="701.500" width="99" height="33" rx="6" class="box"/>
<text x="1596" y="723" class="lab" textLength="45" lengthAdjust="spacingAndGlyphs">Normal</text>
<use href="#cv" x="1670" y="717"/>

<text x="1401" y="788" class="sec" textLength="62" lengthAdjust="spacingAndGlyphs">TABLE STYLE</text>

<path d="M1381 813.500H1866" stroke="#3e3e3e"/>
<rect x="1401.500" y="830.500" width="99" height="33" rx="6" class="box"/>
<text x="1410" y="852" class="lab" textLength="52" lengthAdjust="spacingAndGlyphs">Defaults</text>
<use href="#cv" x="1483" y="846"/>
<rect x="1784.500" y="830.500" width="71" height="33" rx="8" fill="none" stroke="#e6e6e6"/>
<text x="1820" y="852.500" text-anchor="middle" style="font-size:16px;fill:#e6e6e6" textLength="48" lengthAdjust="spacingAndGlyphs">Cancel</text>
</svg>
</body>
</html>
